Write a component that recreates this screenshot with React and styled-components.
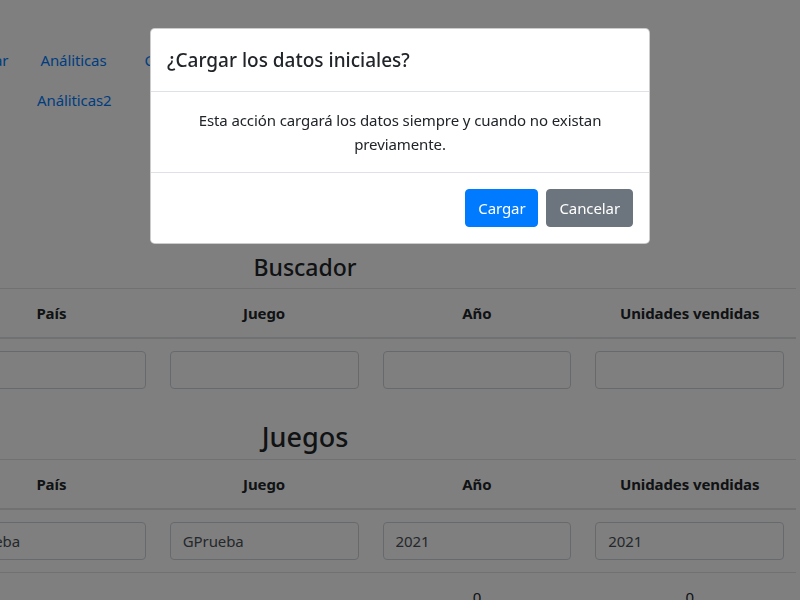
import React from "react";
import styled, { createGlobalStyle } from "styled-components";

const GlobalStyle = createGlobalStyle`
  html, body {
    margin: 0;
    padding: 0;
    overflow: hidden;
    background: #fff;
    font-family: "Noto Sans", "Open Sans", sans-serif;
    color: #212529;
    font-size: 15px;
    letter-spacing: -0.1px;
    line-height: 24px;
  }
  * { box-sizing: border-box; }
`;

const columns = ["", "País", "Juego", "Año", "Unidades vendidas"];

function App() {
  return (
    <>
      <GlobalStyle />
      <Page>
        <Nav>
          <NavRow offset="6px">
            <NavLink>Buscar</NavLink>
            <NavLink>Análiticas</NavLink>
            <NavLink gap>Cargar</NavLink>
          </NavRow>
          <NavRow offset="82px">
            <NavLink>Análiticas2</NavLink>
          </NavRow>
        </Nav>

        <Title small>Buscador</Title>
        <Table>
          <thead>
            <tr>
              {columns.map((c, i) => (
                <Th key={i}>{c}</Th>
              ))}
            </tr>
          </thead>
          <tbody>
            <tr>
              {columns.map((c, i) => (
                <Td key={i}>{i > 0 && <Input defaultValue="" />}</Td>
              ))}
            </tr>
          </tbody>
        </Table>

        <Title>Juegos</Title>
        <Table>
          <thead>
            <tr>
              {columns.map((c, i) => (
                <Th key={i}>{c}</Th>
              ))}
            </tr>
          </thead>
          <tbody>
            <Tr>
              <Td />
              <Td><Input defaultValue="Prueba" /></Td>
              <Td><Input defaultValue="GPrueba" /></Td>
              <Td><Input defaultValue="2021" /></Td>
              <Td><Input defaultValue="2021" /></Td>
            </Tr>
            <Tr>
              <Td />
              <Td />
              <Td />
              <Td center>0</Td>
              <Td center>0</Td>
            </Tr>
          </tbody>
        </Table>
      </Page>

      <Backdrop />
      <Modal>
        <ModalHeader>
          <ModalTitle>¿Cargar los datos iniciales?</ModalTitle>
        </ModalHeader>
        <ModalBody>
          Esta acción cargará los datos siempre y cuando no existan previamente.
        </ModalBody>
        <ModalFooter>
          <Button variant="primary">Cargar</Button>
          <Button variant="secondary">Cancelar</Button>
        </ModalFooter>
      </Modal>
    </>
  );
}

const Page = styled.div`
  width: 982px;
  margin-left: -186px;
  padding-top: 40px;
`;

const Nav = styled.nav`
  display: flex;
  flex-direction: column;
  padding-left: 125px;
`;

const NavRow = styled.div`
  display: flex;
  margin-left: ${(p) => p.offset || "0"};
`;

const NavLink = styled.a`
  display: block;
  padding: 8px 16px;
  margin-left: ${(p) => (p.gap ? "6px" : "0")};
  color: #007bff;
  cursor: pointer;
`;

const Title = styled.h3`
  margin: ${(p) => (p.small ? "133px 0 6px" : "19px 0 5px")};
  text-align: center;
  font-weight: 500;
  font-size: ${(p) => (p.small ? "23px" : "27px")};
  line-height: ${(p) => (p.small ? "29px" : "34px")};
  letter-spacing: 0;
`;

const Table = styled.table`
  width: 100%;
  border-collapse: collapse;
  table-layout: fixed;
  & th:first-child, & td:first-child { width: 131px; }
`;

const Th = styled.th`
  padding: 12px;
  border-top: 1px solid #dee2e6;
  border-bottom: 2px solid #dee2e6;
  font-weight: 700;
  text-align: center;
  white-space: nowrap;
`;

const Tr = styled.tr`
  & + & td { border-top: 1px solid #dee2e6; }
`;

const Td = styled.td`
  padding: 12px;
  text-align: ${(p) => (p.center ? "center" : "left")};
  vertical-align: top;
`;

const Input = styled.input`
  display: block;
  width: 100%;
  height: 38px;
  padding: 6px 12px;
  font: inherit;
  letter-spacing: inherit;
  color: #495057;
  background: #fff;
  border: 1px solid #ced4da;
  border-radius: 4px;
`;

const Backdrop = styled.div`
  position: fixed;
  inset: 0;
  background: rgba(0, 0, 0, 0.5);
`;

const Modal = styled.div`
  position: fixed;
  top: 28px;
  left: 150px;
  width: 500px;
  background: #fff;
  border: 1px solid rgba(0, 0, 0, 0.2);
  border-radius: 4.8px;
  display: flex;
  flex-direction: column;
`;

const ModalHeader = styled.div`
  padding: 16px;
  border-bottom: 1px solid #dee2e6;
`;

const ModalTitle = styled.h5`
  margin: 0;
  font-size: 19px;
  font-weight: 500;
  line-height: 30px;
  letter-spacing: 0;
`;

const ModalBody = styled.div`
  padding: 16px 40px;
  text-align: center;
`;

const ModalFooter = styled.div`
  display: flex;
  justify-content: flex-end;
  align-items: center;
  padding: 12px;
  border-top: 1px solid #dee2e6;
`;

const Button = styled.button`
  margin: 4px;
  padding: 6px 12px;
  font: inherit;
  letter-spacing: inherit;
  line-height: 24px;
  color: #fff;
  border: 1px solid ${(p) => (p.variant === "primary" ? "#007bff" : "#6c757d")};
  background: ${(p) => (p.variant === "primary" ? "#007bff" : "#6c757d")};
  border-radius: 4px;
  cursor: pointer;
`;

export default App;
